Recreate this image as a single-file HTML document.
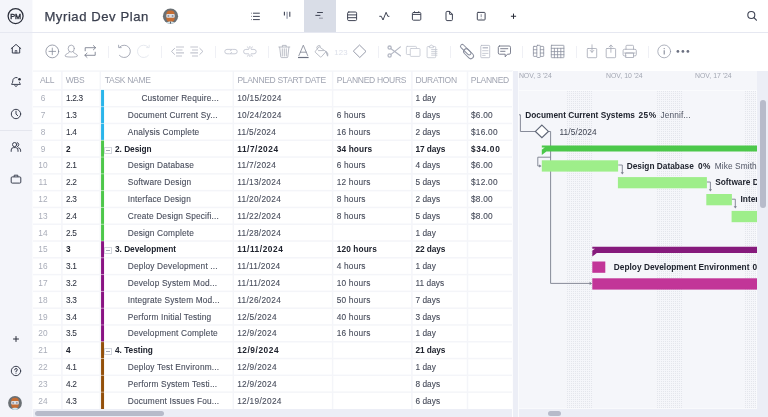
<!DOCTYPE html>
<html lang="en"><head><meta charset="utf-8"><title>Myriad Dev Plan</title>
<style>
html,body{margin:0;padding:0;background:#fff;}
body{width:768px;height:417px;overflow:hidden;font-family:"Liberation Sans",Arial,sans-serif;}
#app{will-change:transform;position:relative;width:768px;height:417px;overflow:hidden;background:#fff;color:#4a4f5e;}
#app *{box-sizing:border-box;}
i{font-style:normal;display:block;position:absolute;}
svg{position:absolute;overflow:visible;}
#side{position:absolute;left:0;top:0;width:32px;height:417px;background:#f4f5fa;border-right:0;}
#sidee{position:absolute;left:32px;top:0;width:1px;height:417px;background:#fafbfd;}
#side .sep{position:absolute;left:0;width:32px;top:129.8px;height:1px;background:#e4e6ee;}
#topbar{position:absolute;left:32.4px;top:0;width:735.6px;height:32px;background:#fff;}
#hline{position:absolute;left:0;top:32px;width:768px;height:1px;background:#e6e8f1;}
#title{position:absolute;left:12px;top:7.6px;font-size:13.1px;letter-spacing:.56px;color:#3a3f4e;white-space:nowrap;line-height:18px;-webkit-text-stroke:.25px #3a3f4e;}
#acttab{position:absolute;left:271.3px;top:0;width:32.3px;height:32px;background:#d9dde7;}
#toolbar{position:absolute;left:32.4px;top:33px;width:735.6px;height:37.4px;background:#fff;}
#tline{position:absolute;left:33px;top:70px;width:480px;height:1px;background:#f8f9fb;}
.ts{position:absolute;top:45.6px;width:1px;height:12.2px;background:#eff0f5;}
#grid{position:absolute;left:32px;top:71px;width:481px;height:338px;background:#fff;overflow:hidden;}
.ghead{position:absolute;left:0;top:0;width:480px;height:19px;}
.hc{position:absolute;top:5px;font-size:8.5px;line-height:9px;letter-spacing:-.3px;color:#a0a4b1;white-space:nowrap;}
.row{position:absolute;left:0;width:480px;height:10px;}
.c{position:absolute;top:0;font-size:8.3px;line-height:10px;letter-spacing:.17px;white-space:nowrap;color:#474c5b;-webkit-text-stroke:.1px #474c5b;}
.row.bold .c{-webkit-text-stroke:0;font-weight:700;color:#20242f;letter-spacing:-.03px;}
.c.num,.row.bold .c.num{-webkit-text-stroke:0;left:1.1px;width:20px;text-align:center;color:#a9adb9;font-weight:400;letter-spacing:.2px;}
.c.wbs{left:33.9px;color:#2e3340;letter-spacing:-.3px;-webkit-text-stroke:.06px #2e3340;}
.row.bold .c.wbs{letter-spacing:-.3px;}
.c.sd{left:205.2px;letter-spacing:.3px;}
.c.hr{left:304.8px;}
.c.du{left:383.5px;letter-spacing:.03px;}
.row.bold .c.du{letter-spacing:-.1px;}
.c.pl{left:438.9px;letter-spacing:.27px;}
.row.bold .c.sd{letter-spacing:.55px;}
.row.bold .c.hr{letter-spacing:.1px;}
.row.bold .c.pl{letter-spacing:.7px;}
.tog{left:72.4px;top:2.5px;width:7.3px;height:7.3px;border:1px solid #d3d6de;background:#fff;}
.tog:after{content:"";position:absolute;left:.4px;top:2.15px;width:4.5px;height:1px;background:#a3a7b3;}
#split{position:absolute;left:512px;top:71px;width:7px;height:346px;background:#eceef6;border-left:1px solid #fdfdfe;border-right:1px solid #fafbfd;}
#hscroll{position:absolute;left:32.4px;top:408.8px;width:735.6px;height:8.2px;background:#eceef6;}
#vscroll{position:absolute;left:757px;top:70.8px;width:11px;height:338px;background:#eceef6;}
.thumb{position:absolute;background:#b7bbca;border-radius:3px;}
#gantt{position:absolute;left:518px;top:71px;width:239px;height:338px;background:#f5f6fa;overflow:hidden;box-shadow:inset -1px -1px 0 #f9fafc;}
#ghd{position:absolute;left:0;top:0;width:240px;height:19.5px;background:#f5f6fa;border-bottom:1px solid #fafbfd;}
.wk{position:absolute;top:0;font-size:6.9px;line-height:9px;color:#a3a7b3;white-space:nowrap;letter-spacing:0;}
.gl{position:absolute;font-size:8.3px;line-height:10px;white-space:nowrap;color:#4f5463;letter-spacing:.11px;}
.gl b{color:#20242f;letter-spacing:.02px;}
.bar{position:absolute;}

</style></head>
<body>
<div id="app">
<div id="side">
<svg width="32" height="32" viewBox="0 0 32 32" style="left:0;top:0"><circle cx="15.6" cy="16.05" r="7.5" fill="none" stroke="#2a2e3a" stroke-width="1.25"/><text transform="translate(15.6 18.95) scale(.92 1)" x="0" y="0" text-anchor="middle" font-family="Liberation Sans, Arial, sans-serif" font-weight="400" font-size="7.9" fill="#2a2e3a" stroke="#2a2e3a" stroke-width=".45">PM</text></svg>
<svg width="12" height="12" viewBox="0 0 12 12" style="left:10.2px;top:43px" fill="none" stroke="#3b4050" stroke-width="1" stroke-linejoin="round" stroke-linecap="round"><path d="M1.2 5.6 L6 1.4 L10.8 5.6"/><path d="M2.3 4.9 V10 H9.7 V4.9"/><path d="M5.2 10 V7.5 H6.8 V10" stroke-width=".8"/></svg>
<svg width="12" height="12" viewBox="0 0 12 12" style="left:10.3px;top:75.6px" fill="none" stroke="#3b4050" stroke-width="1" stroke-linejoin="round" stroke-linecap="round"><path d="M7.2 1.6 A3.3 3.3 0 0 0 2.8 4.8 C2.8 7.2 1.6 7.6 1.6 8.4 H10.4 C10.4 7.8 9.6 7.4 9.4 6.2"/><path d="M4.8 9.6 A1.3 1.3 0 0 0 7.2 9.6"/><circle cx="9.5" cy="3.3" r="1.3" fill="#2a2e3a" stroke="none"/></svg>
<svg width="12" height="12" viewBox="0 0 12 12" style="left:10.1px;top:107.9px" fill="none" stroke="#3b4050" stroke-width="1" stroke-linecap="round"><circle cx="6" cy="6" r="4.7"/><path d="M6 3.2 V6.1 L7.7 7.6"/></svg>
<i class="sep"></i>
<svg width="12" height="12" viewBox="0 0 12 12" style="left:10.1px;top:141px" fill="none" stroke="#3b4050" stroke-width="1" stroke-linecap="round"><circle cx="4.6" cy="3.6" r="2.1"/><path d="M1.2 10.4 V9 A2.4 2.4 0 0 1 3.6 6.6 H5.6 A2.4 2.4 0 0 1 8 9 V10.4"/><path d="M7.2 1.6 A2.1 2.1 0 0 1 7.4 5.6"/><path d="M8.6 6.8 A2.4 2.4 0 0 1 10.6 9.1 V10.4"/></svg>
<svg width="12" height="12" viewBox="0 0 12 12" style="left:10.1px;top:173.1px" fill="none" stroke="#3b4050" stroke-width="1" stroke-linejoin="round"><rect x="1.2" y="3.9" width="9.6" height="6.2" rx="1"/><path d="M4.2 3.9 V2.2 H7.8 V3.9"/></svg>
<svg width="12" height="12" viewBox="0 0 12 12" style="left:10.2px;top:332.5px" fill="none" stroke="#2a2e3a" stroke-width="1"><path d="M6 3.1 V8.9 M3.1 6 H8.9"/></svg>
<svg width="12" height="12" viewBox="0 0 12 12" style="left:10.1px;top:364.8px" fill="none" stroke="#3b4050" stroke-width="1" stroke-linecap="round"><circle cx="6" cy="6" r="4.7"/><path d="M4.7 4.8 A1.3 1.3 0 1 1 6 6.1 V6.8"/><circle cx="6" cy="8.3" r=".5" fill="#3b4050" stroke="none"/></svg>
<svg width="16" height="16" viewBox="0 0 16 16" style="left:6.9px;top:395px"><clipPath id="av2"><circle cx="8" cy="8" r="6.9"/></clipPath><circle cx="8" cy="8" r="6.9" fill="#6a7074"/><g clip-path="url(#av2)"><rect x="4.3" y="2.8" width="7.4" height="10.4" rx="3.3" fill="#c56d33"/><rect x="4.2" y="6" width="7.6" height="3.4" rx="1" fill="#dcdfe4"/><rect x="5.4" y="6.9" width="1.5" height="1.8" fill="#8d97a8"/><rect x="9.1" y="6.9" width="1.5" height="1.8" fill="#8d97a8"/><path d="M4.5 15 V13.7 L6.8 12.8 H9.2 L11.5 13.7 V15 Z" fill="#cfe6f0"/></g></svg>
</div>
<div id="topbar"><i id="acttab"></i><div id="title">Myriad Dev Plan</div></div>
<div id="toolbar"></div>
<i id="tline"></i>
<i class="ts" style="left:108px"></i><i class="ts" style="left:161px"></i><i class="ts" style="left:214.5px"></i><i class="ts" style="left:268px"></i><i class="ts" style="left:377.5px"></i><i class="ts" style="left:450.2px"></i><i class="ts" style="left:522px"></i><i class="ts" style="left:575.6px"></i><i class="ts" style="left:647.6px"></i>
<svg id="icons" width="768" height="71" viewBox="0 0 768 71" style="left:0;top:0" fill="none" stroke-linecap="round" stroke-linejoin="round">
<!-- avatar -->
<g><clipPath id="av1"><circle cx="170.5" cy="16.2" r="7.6"/></clipPath><circle cx="170.5" cy="16.2" r="7.6" fill="#6a7074"/><g clip-path="url(#av1)"><rect x="166.4" y="10.5" width="8.2" height="11.4" rx="3.6" fill="#c56d33"/><rect x="166.3" y="14" width="8.4" height="3.7" rx="1" fill="#dcdfe4"/><rect x="167.6" y="15" width="1.6" height="1.9" fill="#8d97a8"/><rect x="171.8" y="15" width="1.6" height="1.9" fill="#8d97a8"/><path d="M166.6 23.8 V22.4 L169.2 21.4 H171.8 L174.4 22.4 V23.8 Z" fill="#cfe6f0"/><rect x="170.1" y="21.6" width=".9" height="2.2" fill="#4a4f5a"/></g></g>
<!-- nav icons -->
<g stroke="#3f4454" stroke-width="1">
<path d="M253 13.2 H259.8 M253 16.4 H259.8 M253 19.6 H259.8" stroke-linecap="butt"/><path d="M251.1 13.2 H251.7 M251.1 16.4 H251.7 M251.1 19.6 H251.7" stroke-linecap="butt"/>
<path d="M284.4 11.8 V15.4 M289.8 11.8 V16.7" stroke-linecap="butt" stroke-width="1.1"/><path d="M287.1 11.8 V18.8" stroke="#b0b4c0" stroke-width="1.7" stroke-linecap="butt"/>
<path d="M317.1 12.5 H322.9 M315.4 15.4 H320.4" stroke-linecap="butt"/><path d="M319 18.2 H322.9" stroke="#9a9eac" stroke-linecap="butt" stroke-width="1.2"/>
<rect x="347.6" y="12" width="9" height="8.6" rx="1.2"/><path d="M347.6 14.9 H356.6 M347.6 17.7 H356.6" stroke-linecap="butt"/>
<path d="M379.7 16.3 H381.3 L383 20 L386.1 12.3 L387.8 16.3 H389"/>
<rect x="412.4" y="12.5" width="8.4" height="7.7" rx="1"/><path d="M412.4 14.4 H420.8 M414.5 11.3 V12.5 M418.7 11.3 V12.5" stroke-linecap="butt"/>
<path d="M446 12.4 A1 1 0 0 1 447 11.4 H449.6 L452.4 14.3 V19.6 A1 1 0 0 1 451.4 20.6 H447 A1 1 0 0 1 446 19.6 Z"/><path d="M449.6 11.4 V14.3 H452.4" />
<rect x="477.3" y="12.4" width="7.8" height="7.6" rx=".8"/><path d="M481.2 14.2 V17" stroke="#8b8f9d" stroke-linecap="butt"/><path d="M481.2 17.8 V18.5" stroke="#8b8f9d" stroke-linecap="butt"/>
<path d="M513.5 13.6 V18.9 M510.9 16.25 H516.1" stroke-linecap="butt" stroke="#2a2e3a"/>
<circle cx="751.3" cy="15" r="3.5" stroke-width="1.1"/><path d="M753.9 17.6 L756.4 20.2" stroke-width="1.2"/>
</g>
<!-- toolbar icons -->
<g stroke="#858a99" stroke-width=".8">
<circle cx="52.3" cy="51.4" r="6.4"/><path d="M52.3 48.1 V54.7 M49 51.4 H55.6"/>
<g stroke="#9a9eac"><ellipse cx="71.25" cy="48.6" rx="3.1" ry="3.5"/><path d="M69.6 51.7 C69.6 53.6 65 53.6 65 56 C65 57.4 77.5 57.4 77.5 56 C77.5 53.6 72.9 53.6 72.9 51.7"/></g>
<path d="M85.2 50.8 V47.7 H95.4 M93.4 45.6 L95.6 47.7 L93.4 49.8 M95.2 52.2 V55.3 H85 M87 53.2 L84.8 55.3 L87 57.4" stroke="#6f7484"/>
<g stroke="#9499a8"><path d="M119.8 46.9 A6.2 6.2 0 1 1 119.4 55.4"/><path d="M118.6 45.2 V47.6 H121.2" /></g>
<g stroke="#e0e3eb"><path d="M148 46.9 A6.2 6.2 0 1 0 148.4 55.4"/><path d="M149.2 45.2 V47.6 H146.6"/></g>
</g>
<g stroke="#c3c6d0" stroke-width="1.1" stroke-linecap="butt">
<path d="M176 47 H184 M176 50 H182.5 M176 52.9 H184 M176 56 H182"/>
<path d="M190.3 47 H198 M192 50 H198 M190.3 52.9 H198 M192 56 H198"/>
</g>
<g stroke="#b4b8c4" stroke-width=".9"><path d="M174.6 48.4 L171.5 51.4 L174.6 54.4"/><path d="M199.8 48.4 L202.9 51.4 L199.8 54.4"/></g>
<g stroke="#c3c6d1" stroke-width=".9">
<path d="M231.5 49.4 H227 A2.2 2.2 0 0 0 227 53.8 H229.6 A2.2 2.2 0 0 0 231.6 52.4 M230.5 53.8 H235 A2.2 2.2 0 0 0 235 49.4 H232.4 A2.2 2.2 0 0 0 230.4 50.8"/>
<path d="M248.5 49.4 H245.8 A2.2 2.2 0 0 0 245.8 53.8 H248.5 M251.3 49.4 H254 A2.2 2.2 0 0 1 254 53.8 H251.3 M249.9 48.4 V46.4 M248.4 48.3 L247.6 46.9 M251.4 48.3 L252.2 46.9 M249.9 54.8 V56.6 M248.4 54.9 L247.6 56.2 M251.4 54.9 L252.2 56.2"/>
</g>
<g stroke="#a9adb9" stroke-width=".8">
<path d="M278.8 47 H289.8 M282.4 46.8 V45.4 H286.2 V46.8 M279.7 47.3 L280.8 57 A.8 .8 0 0 0 281.6 57.6 H287 A.8 .8 0 0 0 287.8 57 L288.9 47.3 M282.3 48.8 V56 M284.3 48.8 V56 M286.3 48.8 V56"/>
</g>
<g stroke="#7f8493" stroke-width=".8"><path d="M298.9 55.6 L303.3 45.2 L307.7 55.6 M300.4 52.2 H306.2"/></g>
<path d="M298 57.5 H308.6" stroke="#6b7080" stroke-width="1.2" stroke-linecap="butt"/>
<g stroke="#a9adb9" stroke-width=".8">
<path d="M319.4 46.9 L326 51.6 L321.4 56.8 A.9 .9 0 0 1 320.2 56.8 L315.4 52.4 A.9 .9 0 0 1 315.4 51.2 Z M317.4 49.2 A2 2 0 0 1 320.6 46.2 M318.5 50.6 H323.5"/>
<path d="M326 51.6 C328 52.4 328.2 54.4 327.6 56.2 C327 54.8 326.6 53.6 326 51.6 Z" fill="#c3c6d1"/>
</g>
<text x="334.3" y="54.5" font-family="Liberation Sans, Arial, sans-serif" font-size="7.8" fill="#dde0ea" stroke="none" letter-spacing=".1">123</text>
<path d="M359.8 45.3 L366 51.4 L359.8 57.5 L353.6 51.4 Z" stroke="#8b90a0" stroke-width=".9"/>
<g stroke="#b4b8c4" stroke-width=".9">
<circle cx="389.6" cy="47.6" r="1.6" stroke-width="1.3"/><circle cx="389.6" cy="55.5" r="1.6" stroke-width="1.3"/><path d="M391 48.7 L400.4 55.8 M391 54.4 L400.4 46.9" stroke-width="1.2"/>
</g>
<g stroke="#c3c6d1" stroke-width=".8">
<rect x="406.4" y="46.4" width="10" height="8.1" rx=".8"/><rect x="410.3" y="48.5" width="9.7" height="7.9" rx=".8" fill="#fff"/>
<path d="M429.4 46.5 H428 A.9 .9 0 0 0 427.1 47.4 V56.8 A.9 .9 0 0 0 428 57.7 H434.8 A.9 .9 0 0 0 435.7 56.8 V47.4 A.9 .9 0 0 0 434.8 46.5 H433.4 M429.4 47.3 V46 H430.4 A1 1 0 0 1 432.4 46 H433.4 V47.3 Z M431.6 49.5 H437 M431.6 51.4 H437 M431.6 53.3 H437 M431.6 55.2 H437"/>
</g>
<g stroke="#8a8f9e" stroke-width="1" transform="translate(466.6 51.7) rotate(45)">
<rect x="-8.7" y="-2.6" width="13.4" height="3.6" rx="1.8"/><rect x="-3" y="-2.7" width="11.7" height="5.5" rx="2.75"/>
</g>
<g stroke="#b4b8c4" stroke-width=".8">
<rect x="480.8" y="45.4" width="8.9" height="12.3" rx=".8"/><path d="M482.6 47.8 H488 " stroke-width="1.3" stroke-linecap="butt"/><path d="M482.6 50.7 H488 M482.6 53.4 H488 M482.6 55.4 H485.2" stroke-width=".7"/>
</g>
<g stroke="#6f7484" stroke-width=".9">
<path d="M499.6 46 H509.2 A1.3 1.3 0 0 1 510.5 47.3 V52.9 A1.3 1.3 0 0 1 509.2 54.2 H507.4 L505.2 56.8 V54.2 H499.6 A1.3 1.3 0 0 1 498.3 52.9 V47.3 A1.3 1.3 0 0 1 499.6 46 Z"/><path d="M500.6 48.7 H507.8 M500.6 51.3 H505"/>
</g>
<g stroke="#8b90a0" stroke-width=".8">
<rect x="533.4" y="46.4" width="10.3" height="10" rx=".6"/><rect x="536.8" y="45.3" width="3.5" height="12.2" rx=".8" fill="#fff"/><path d="M533.4 49.7 H536.8 M533.4 53 H536.8 M540.3 49.7 H543.7 M540.3 53 H543.7"/>
<rect x="551.3" y="45.3" width="12.6" height="12.4" rx=".4"/><path d="M551.3 48.3 H563.9 M551.3 51.6 H563.9 M551.3 54.7 H563.9 M554.4 48.3 V57.7 M557.6 48.3 V57.7 M560.8 48.3 V57.7"/>
</g>
<g stroke="#a3a7b4" stroke-width=".8">
<rect x="587.3" y="48.5" width="9.4" height="9.2" rx=".8"/><path d="M592 44.8 V52.2 M590.2 50.4 L592 52.3 L593.8 50.4"/>
<rect x="606.2" y="48.5" width="9.4" height="9.2" rx=".8"/><path d="M610.9 52.3 V45.2 M609.1 46.9 L610.9 45 L612.7 46.9"/>
<path d="M626 49.3 V46.2 A.9 .9 0 0 1 626.9 45.3 H632.6 A.9 .9 0 0 1 633.5 46.2 V49.3 M626 55.9 H624.4 A1.3 1.3 0 0 1 623.1 54.6 V50.6 A1.3 1.3 0 0 1 624.4 49.3 H635 A1.3 1.3 0 0 1 636.3 50.6 V54.6 A1.3 1.3 0 0 1 635 55.9 H633.5 M626 53 H633.5 V57.5 H626 Z M624.6 53 H635"/>
</g>
<g stroke="#8b90a0" stroke-width=".7"><circle cx="664.2" cy="51.4" r="6.4"/></g>
<path d="M664.2 50.3 V54.5" stroke="#858a99" stroke-width="1.1" stroke-linecap="butt"/><circle cx="664.2" cy="48.6" r=".65" fill="#858a99"/>
<g fill="#6b7080"><circle cx="677.9" cy="51.4" r="1.4"/><circle cx="682.9" cy="51.4" r="1.4"/><circle cx="687.9" cy="51.4" r="1.4"/></g>
</svg>
<div id="grid">
<svg width="481" height="338" viewBox="32 71 481 338" style="left:0;top:0"><rect x="100.75" y="89.90" width="3.3" height="16.79" fill="#2bb5ea"/><rect x="100.75" y="106.69" width="3.3" height="16.79" fill="#2bb5ea"/><rect x="100.75" y="123.48" width="3.3" height="16.79" fill="#2bb5ea"/><rect x="100.75" y="140.27" width="3.3" height="16.79" fill="#4dc74a"/><rect x="100.75" y="157.06" width="3.3" height="16.79" fill="#4dc74a"/><rect x="100.75" y="173.85" width="3.3" height="16.79" fill="#4dc74a"/><rect x="100.75" y="190.64" width="3.3" height="16.79" fill="#4dc74a"/><rect x="100.75" y="207.43" width="3.3" height="16.79" fill="#4dc74a"/><rect x="100.75" y="224.22" width="3.3" height="16.79" fill="#4dc74a"/><rect x="100.75" y="241.01" width="3.3" height="16.79" fill="#8a1383"/><rect x="100.75" y="257.80" width="3.3" height="16.79" fill="#8a1383"/><rect x="100.75" y="274.59" width="3.3" height="16.79" fill="#8a1383"/><rect x="100.75" y="291.38" width="3.3" height="16.79" fill="#8a1383"/><rect x="100.75" y="308.17" width="3.3" height="16.79" fill="#8a1383"/><rect x="100.75" y="324.96" width="3.3" height="16.79" fill="#8a1383"/><rect x="100.75" y="341.75" width="3.3" height="16.79" fill="#93500a"/><rect x="100.75" y="358.54" width="3.3" height="16.79" fill="#93500a"/><rect x="100.75" y="375.33" width="3.3" height="16.79" fill="#93500a"/><rect x="100.75" y="392.12" width="3.3" height="16.88" fill="#93500a"/><rect x="32.5" y="89.15" width="68.2" height="1.5" fill="#f4f5f9"/><rect x="104.05" y="89.15" width="408.5" height="1.5" fill="#f4f5f9"/><rect x="32.5" y="105.94" width="68.2" height="1.5" fill="#f4f5f9"/><rect x="104.05" y="105.94" width="408.5" height="1.5" fill="#f4f5f9"/><rect x="100.75" y="106.19" width="3.3" height="1" fill="#fff" opacity=".4"/><rect x="32.5" y="122.73" width="68.2" height="1.5" fill="#f4f5f9"/><rect x="104.05" y="122.73" width="408.5" height="1.5" fill="#f4f5f9"/><rect x="100.75" y="122.98" width="3.3" height="1" fill="#fff" opacity=".4"/><rect x="32.5" y="139.52" width="68.2" height="1.5" fill="#f4f5f9"/><rect x="104.05" y="139.52" width="408.5" height="1.5" fill="#f4f5f9"/><rect x="100.75" y="139.77" width="3.3" height="1" fill="#fff" opacity=".4"/><rect x="32.5" y="156.31" width="68.2" height="1.5" fill="#f4f5f9"/><rect x="104.05" y="156.31" width="408.5" height="1.5" fill="#f4f5f9"/><rect x="100.75" y="156.56" width="3.3" height="1" fill="#fff" opacity=".4"/><rect x="32.5" y="173.10" width="68.2" height="1.5" fill="#f4f5f9"/><rect x="104.05" y="173.10" width="408.5" height="1.5" fill="#f4f5f9"/><rect x="100.75" y="173.35" width="3.3" height="1" fill="#fff" opacity=".4"/><rect x="32.5" y="189.89" width="68.2" height="1.5" fill="#f4f5f9"/><rect x="104.05" y="189.89" width="408.5" height="1.5" fill="#f4f5f9"/><rect x="100.75" y="190.14" width="3.3" height="1" fill="#fff" opacity=".4"/><rect x="32.5" y="206.68" width="68.2" height="1.5" fill="#f4f5f9"/><rect x="104.05" y="206.68" width="408.5" height="1.5" fill="#f4f5f9"/><rect x="100.75" y="206.93" width="3.3" height="1" fill="#fff" opacity=".4"/><rect x="32.5" y="223.47" width="68.2" height="1.5" fill="#f4f5f9"/><rect x="104.05" y="223.47" width="408.5" height="1.5" fill="#f4f5f9"/><rect x="100.75" y="223.72" width="3.3" height="1" fill="#fff" opacity=".4"/><rect x="32.5" y="240.26" width="68.2" height="1.5" fill="#f4f5f9"/><rect x="104.05" y="240.26" width="408.5" height="1.5" fill="#f4f5f9"/><rect x="100.75" y="240.51" width="3.3" height="1" fill="#fff" opacity=".4"/><rect x="32.5" y="257.05" width="68.2" height="1.5" fill="#f4f5f9"/><rect x="104.05" y="257.05" width="408.5" height="1.5" fill="#f4f5f9"/><rect x="100.75" y="257.30" width="3.3" height="1" fill="#fff" opacity=".4"/><rect x="32.5" y="273.84" width="68.2" height="1.5" fill="#f4f5f9"/><rect x="104.05" y="273.84" width="408.5" height="1.5" fill="#f4f5f9"/><rect x="100.75" y="274.09" width="3.3" height="1" fill="#fff" opacity=".4"/><rect x="32.5" y="290.63" width="68.2" height="1.5" fill="#f4f5f9"/><rect x="104.05" y="290.63" width="408.5" height="1.5" fill="#f4f5f9"/><rect x="100.75" y="290.88" width="3.3" height="1" fill="#fff" opacity=".4"/><rect x="32.5" y="307.42" width="68.2" height="1.5" fill="#f4f5f9"/><rect x="104.05" y="307.42" width="408.5" height="1.5" fill="#f4f5f9"/><rect x="100.75" y="307.67" width="3.3" height="1" fill="#fff" opacity=".4"/><rect x="32.5" y="324.21" width="68.2" height="1.5" fill="#f4f5f9"/><rect x="104.05" y="324.21" width="408.5" height="1.5" fill="#f4f5f9"/><rect x="100.75" y="324.46" width="3.3" height="1" fill="#fff" opacity=".4"/><rect x="32.5" y="341.00" width="68.2" height="1.5" fill="#f4f5f9"/><rect x="104.05" y="341.00" width="408.5" height="1.5" fill="#f4f5f9"/><rect x="100.75" y="341.25" width="3.3" height="1" fill="#fff" opacity=".4"/><rect x="32.5" y="357.79" width="68.2" height="1.5" fill="#f4f5f9"/><rect x="104.05" y="357.79" width="408.5" height="1.5" fill="#f4f5f9"/><rect x="100.75" y="358.04" width="3.3" height="1" fill="#fff" opacity=".4"/><rect x="32.5" y="374.58" width="68.2" height="1.5" fill="#f4f5f9"/><rect x="104.05" y="374.58" width="408.5" height="1.5" fill="#f4f5f9"/><rect x="100.75" y="374.83" width="3.3" height="1" fill="#fff" opacity=".4"/><rect x="32.5" y="391.37" width="68.2" height="1.5" fill="#f4f5f9"/><rect x="104.05" y="391.37" width="408.5" height="1.5" fill="#f4f5f9"/><rect x="100.75" y="391.62" width="3.3" height="1" fill="#fff" opacity=".4"/><rect x="32.5" y="71" width="480" height=".9" fill="#f5f6fa"/><rect x="61.15" y="70.8" width="1.5" height="338.2" fill="#f4f5f9"/><rect x="99.55" y="70.8" width="1.5" height="338.2" fill="#f4f5f9"/><rect x="232.55" y="70.8" width="1.5" height="338.2" fill="#f4f5f9"/><rect x="331.85" y="70.8" width="1.5" height="338.2" fill="#f4f5f9"/><rect x="411.15" y="70.8" width="1.5" height="338.2" fill="#f4f5f9"/><rect x="466.75" y="70.8" width="1.5" height="338.2" fill="#f4f5f9"/></svg>
<div class="ghead"><span class="hc" style="left:8.0px">ALL</span><span class="hc" style="left:33.8px">WBS</span><span class="hc" style="left:72.8px">TASK NAME</span><span class="hc" style="left:205.4px">PLANNED START DATE</span><span class="hc" style="left:304.8px">PLANNED HOURS</span><span class="hc" style="left:383.4px">DURATION</span><span class="hc" style="left:438.8px">PLANNED</span></div>
<div class="row" style="top:22.00px"><span class="c num">6</span><span class="c wbs">1.2.3</span><span class="c nm" style="left:109.4px">Customer Require...</span><span class="c sd">10/15/2024</span><span class="c du">1 day</span></div>
<div class="row" style="top:39.00px"><span class="c num">7</span><span class="c wbs">1.3</span><span class="c nm" style="left:95.8px">Document Current Sy...</span><span class="c sd">10/24/2024</span><span class="c hr">6 hours</span><span class="c du">8 days</span><span class="c pl">$6.00</span></div>
<div class="row" style="top:56.00px"><span class="c num">8</span><span class="c wbs">1.4</span><span class="c nm" style="left:95.8px">Analysis Complete</span><span class="c sd">11/5/2024</span><span class="c hr">16 hours</span><span class="c du">2 days</span><span class="c pl">$16.00</span></div>
<div class="row bold" style="top:73.00px"><span class="c num">9</span><span class="c wbs">2</span><i class="tog"></i><span class="c nm" style="left:83.0px">2. Design</span><span class="c sd">11/7/2024</span><span class="c hr">34 hours</span><span class="c du">17 days</span><span class="c pl">$34.00</span></div>
<div class="row" style="top:89.00px"><span class="c num">10</span><span class="c wbs">2.1</span><span class="c nm" style="left:95.8px">Design Database</span><span class="c sd">11/7/2024</span><span class="c hr">6 hours</span><span class="c du">4 days</span><span class="c pl">$6.00</span></div>
<div class="row" style="top:106.00px"><span class="c num">11</span><span class="c wbs">2.2</span><span class="c nm" style="left:95.8px">Software Design</span><span class="c sd">11/13/2024</span><span class="c hr">12 hours</span><span class="c du">5 days</span><span class="c pl">$12.00</span></div>
<div class="row" style="top:123.00px"><span class="c num">12</span><span class="c wbs">2.3</span><span class="c nm" style="left:95.8px">Interface Design</span><span class="c sd">11/20/2024</span><span class="c hr">8 hours</span><span class="c du">2 days</span><span class="c pl">$8.00</span></div>
<div class="row" style="top:140.00px"><span class="c num">13</span><span class="c wbs">2.4</span><span class="c nm" style="left:95.8px">Create Design Specifi...</span><span class="c sd">11/22/2024</span><span class="c hr">8 hours</span><span class="c du">5 days</span><span class="c pl">$8.00</span></div>
<div class="row" style="top:157.00px"><span class="c num">14</span><span class="c wbs">2.5</span><span class="c nm" style="left:95.8px">Design Complete</span><span class="c sd">11/28/2024</span><span class="c du">1 day</span></div>
<div class="row bold" style="top:173.00px"><span class="c num">15</span><span class="c wbs">3</span><i class="tog"></i><span class="c nm" style="left:83.0px">3. Development</span><span class="c sd">11/11/2024</span><span class="c hr">120 hours</span><span class="c du">22 days</span></div>
<div class="row" style="top:190.00px"><span class="c num">16</span><span class="c wbs">3.1</span><span class="c nm" style="left:95.8px">Deploy Development ...</span><span class="c sd">11/11/2024</span><span class="c hr">4 hours</span><span class="c du">1 day</span></div>
<div class="row" style="top:207.00px"><span class="c num">17</span><span class="c wbs">3.2</span><span class="c nm" style="left:95.8px">Develop System Mod...</span><span class="c sd">11/11/2024</span><span class="c hr">10 hours</span><span class="c du">11 days</span></div>
<div class="row" style="top:224.00px"><span class="c num">18</span><span class="c wbs">3.3</span><span class="c nm" style="left:95.8px">Integrate System Mod...</span><span class="c sd">11/26/2024</span><span class="c hr">50 hours</span><span class="c du">7 days</span></div>
<div class="row" style="top:241.00px"><span class="c num">19</span><span class="c wbs">3.4</span><span class="c nm" style="left:95.8px">Perform Initial Testing</span><span class="c sd">12/5/2024</span><span class="c hr">40 hours</span><span class="c du">3 days</span></div>
<div class="row" style="top:257.00px"><span class="c num">20</span><span class="c wbs">3.5</span><span class="c nm" style="left:95.8px">Development Complete</span><span class="c sd">12/9/2024</span><span class="c hr">16 hours</span><span class="c du">1 day</span></div>
<div class="row bold" style="top:274.00px"><span class="c num">21</span><span class="c wbs">4</span><i class="tog"></i><span class="c nm" style="left:83.0px">4. Testing</span><span class="c sd">12/9/2024</span><span class="c du">21 days</span></div>
<div class="row" style="top:291.00px"><span class="c num">22</span><span class="c wbs">4.1</span><span class="c nm" style="left:95.8px">Deploy Test Environm...</span><span class="c sd">12/9/2024</span><span class="c du">1 day</span></div>
<div class="row" style="top:308.00px"><span class="c num">23</span><span class="c wbs">4.2</span><span class="c nm" style="left:95.8px">Perform System Testi...</span><span class="c sd">12/9/2024</span><span class="c du">8 days</span></div>
<div class="row" style="top:325.00px"><span class="c num">24</span><span class="c wbs">4.3</span><span class="c nm" style="left:95.8px">Document Issues Fou...</span><span class="c sd">12/19/2024</span><span class="c du">6 days</span></div>
</div>
<div id="gantt">
<div id="ghd"><span class="wk" style="left:.9px">NOV, 3 '24</span><span class="wk" style="left:88px">NOV, 10 '24</span><span class="wk" style="left:177px">NOV, 17 '24</span></div>
<svg width="239" height="338" viewBox="518 71 239 338" style="left:0;top:0" fill="none">
<defs><pattern id="dots" x="567" y="91" width="2" height="2" patternUnits="userSpaceOnUse"><rect x="0" y="0" width="1" height="1" fill="#e4e6ec"/></pattern></defs>
<rect x="567" y="91" width="25" height="318" fill="url(#dots)"/>
<rect x="656" y="91" width="26" height="318" fill="url(#dots)"/>
<rect x="745" y="91" width="12" height="318" fill="url(#dots)"/>
<!-- connectors -->
<g stroke="#7a7f8d" stroke-width=".9">
<path d="M518.8 114.8 H520.4 V131.5 H535"/>
<path d="M548.8 131.5 H550.6 V283.4 H590.6"/>
<path d="M550.6 157.2 H537.8 V166 H540"/>
<path d="M618.2 165 H622.3 V173"/>
<path d="M706.9 182 H710.4 V190"/>
<path d="M732 199.2 H735.3 V207"/>
</g>
<g fill="#7a7f8d"><path d="M539.2 164.4 L541.6 166 L539.2 167.6 Z"/><path d="M620.7 172.2 L622.3 174.6 L623.9 172.2 Z"/><path d="M708.8 189.2 L710.4 191.6 L712 189.2 Z"/><path d="M733.7 206.2 L735.3 208.6 L736.9 206.2 Z"/><path d="M589.6 281.8 L592.2 283.4 L589.6 285 Z"/></g>
<!-- milestone -->
<path d="M541.9 125.1 L548.4 131.4 L541.9 137.7 L535.4 131.4 Z" fill="#fff" stroke="#5f6676" stroke-width="1.2"/>
<!-- design summary -->
<path d="M541.8 145.5 H757 V151.5 H546.4 L541.8 154.9 Z" fill="#4cc84a"/>
<path d="M541.2 147.4 H544.8 L542 149.4 H541.2 Z" fill="#f0fcef"/>
<!-- tasks -->
<rect x="541.8" y="160.3" width="76.3" height="11.3" fill="#9eee8a"/>
<rect x="617.9" y="177.1" width="89" height="11.2" fill="#9eee8a"/>
<rect x="706.3" y="194" width="25.6" height="11.3" fill="#9eee8a"/>
<rect x="731.6" y="210.9" width="26" height="11.3" fill="#9eee8a"/>
<!-- development summary -->
<path d="M592.3 246.8 H757 V253 H596.8 L592.3 256.6 Z" fill="#861a7c"/>
<path d="M591.6 248.7 H595 L592.3 250.6 H591.6 Z" fill="#fbeffa"/>
<rect x="592.3" y="261.5" width="13" height="11.3" fill="#c23598"/>
<rect x="592.3" y="278.3" width="165" height="11.3" fill="#c23598"/>
</svg>
<span class="gl" style="left:7.2px;top:39px"><b>Document Current Systems</b></span>
<span class="gl" style="left:120.5px;top:39px"><b style="letter-spacing:.45px">25%</b></span>
<span class="gl" style="left:142.5px;top:39px">Jennif...</span>
<span class="gl" style="left:41.5px;top:56px;color:#3f4452">11/5/2024</span>
<span class="gl" style="left:108.7px;top:90px"><b>Design Database</b></span>
<span class="gl" style="left:179.9px;top:90px"><b style="letter-spacing:.4px">0%</b></span>
<span class="gl" style="left:196.7px;top:90px">Mike Smith</span>
<span class="gl" style="left:197.2px;top:106px"><b>Software Design</b></span>
<span class="gl" style="left:222.5px;top:123px"><b>Interface Design</b></span>
<span class="gl" style="left:95.8px;top:191px"><b>Deploy Development Environment</b></span>
<span class="gl" style="left:234.5px;top:191px"><b style="letter-spacing:.4px">0%</b></span>
</div>
<i id="vscroll"><i class="thumb" style="left:3.4px;top:29.2px;width:5.4px;height:108.5px"></i></i>
<i id="hscroll"><i class="thumb" style="left:2.4px;top:2.6px;width:129.5px;height:5px"></i><i class="thumb" style="left:515.5px;top:2.6px;width:13.4px;height:5px"></i></i>
<i id="split"></i>
<i id="sidee"></i>
<i id="hline"></i>
</div>
</body></html>
